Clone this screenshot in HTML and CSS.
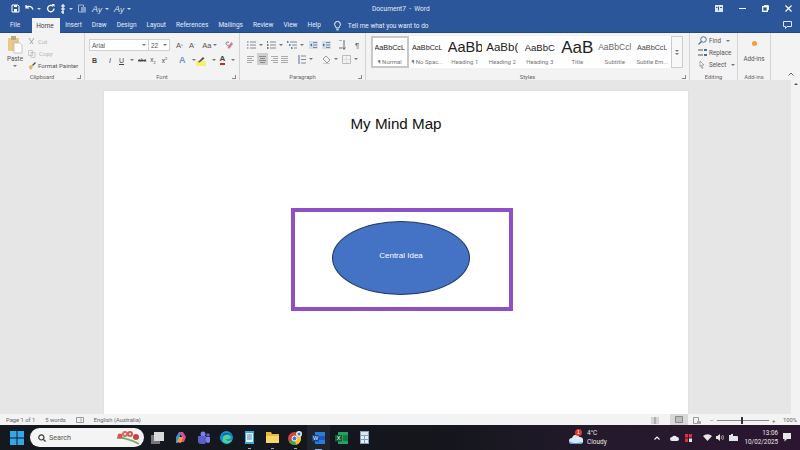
FILE: index.html
```html
<!DOCTYPE html>
<html lang="en">
<head>
<meta charset="utf-8">
<title>Document7 - Word</title>
<link rel="stylesheet" href="styles.css">
</head>
<body>
<div class="app">
  <header class="titlebar">
    <div class="qat">
      <svg class="ic" width="9" height="9" viewBox="0 0 9 9"><path d="M1 1h6l1 1v6H1z" fill="none" stroke="#fff"/><path d="M3 1h3v2H3zM3 5h3v3H3z" fill="#fff"/></svg>
      <svg class="ic" width="9" height="9" viewBox="0 0 9 9"><path d="M1 3.500C3 1.500 7 2 8 5.500M1 1v3h3" fill="none" stroke="#fff" stroke-width="1.200"/></svg>
      <span class="caret w"></span>
      <svg class="ic" width="9" height="9" viewBox="0 0 9 9"><path d="M7 2.200A3.200 3.200 0 1 0 8 4.500" fill="none" stroke="#fff" stroke-width="1.300"/><path d="M5.500 0h3v3z" fill="#fff"/></svg>
      <svg class="ic" width="6" height="10" viewBox="0 0 6 10"><path d="M3 0v10M1 2h4M1 5h4M1 8h3" stroke="#fff" stroke-width="1.200"/></svg>
      <span class="caret w"></span>
      <svg class="ic" width="9" height="9" viewBox="0 0 9 9"><path d="M.5 1h5v7h-5z" fill="none" stroke="#9db4d8"/><path d="M3 3h5v5.500H3z" fill="#7f9bc8"/></svg>
      <span class="qat-a">A<i>y</i></span>
      <span class="caret w"></span>
      <span class="qat-a">A<i>y</i></span>
      <span class="caret w small"></span>
    </div>
    <div class="doc-title">Document7&nbsp; -&nbsp; Word</div>
    <div class="winctl">
      <svg width="8" height="7" viewBox="0 0 8 7"><path d="M0 0h8v7H0z" fill="#dfe7f4"/><path d="M3.500 1.500v4M1 2.500h1.500M5 2.500h2" stroke="#2b579a"/></svg>
      <span class="minbtn"></span>
      <svg width="7" height="7" viewBox="0 0 7 7"><rect x=".7" y="1.700" width="4.600" height="4.600" fill="none" stroke="#fff" stroke-width="1.300"/><path d="M2 .6h4.400V5" fill="none" stroke="#fff"/></svg>
      <svg width="7" height="7" viewBox="0 0 7 7"><path d="M.5.500l6 6M6.500.500l-6 6" stroke="#fff" stroke-width="1.200"/></svg>
    </div>
  </header>

  <nav class="tabs">
    <span class="tab file">File</span>
    <span class="tab active">Home</span>
    <span class="tab">Insert</span>
    <span class="tab">Draw</span>
    <span class="tab">Design</span>
    <span class="tab">Layout</span>
    <span class="tab">References</span>
    <span class="tab">Mailings</span>
    <span class="tab">Review</span>
    <span class="tab">View</span>
    <span class="tab">Help</span>
    <span class="tell">
      <svg width="7" height="10" viewBox="0 0 7 10"><path d="M2.200 7C2 5.500.6 5 .6 3.300a2.900 2.900 0 0 1 5.800 0C6.400 5 5 5.500 4.800 7zM2.300 8.800h2.400" fill="none" stroke="#fff"/></svg>
      Tell me what you want to do
    </span>
    <svg class="comment" width="9" height="8" viewBox="0 0 9 8"><path d="M.5.500h8v5H4L2.500 7.500v-2h-2z" fill="none" stroke="#dfe7f4"/></svg>
  </nav>

  <section class="ribbon">
    <div class="group g-clip">
      <div class="group-body clip-body">
        <div class="paste">
          <svg width="15" height="18" viewBox="0 0 15 18"><rect x="0" y="2" width="11" height="13" rx="1" fill="#e8c787"/><rect x="3" y="0" width="5" height="4" fill="#b9a98c"/><path d="M6 7h6l2 2v8H6z" fill="#fff" stroke="#a9a9a9" stroke-width=".6"/></svg>
          <span>Paste</span>
          <span class="caret"></span>
        </div>
        <div class="clip-list">
          <div class="clip-row off"><svg width="7" height="7" viewBox="0 0 7 7"><path d="M1 0l4 6M6 0L2 6" stroke="#a8a8a8"/></svg>Cut</div>
          <div class="clip-row off"><svg width="8" height="8" viewBox="0 0 8 8"><path d="M.5.500h4v5h-4zM3 2.500h4v5H3z" fill="#f3f3f3" stroke="#bbb" stroke-width=".7"/></svg>Copy</div>
          <div class="clip-row"><svg width="8" height="8" viewBox="0 0 8 8"><path d="M4 3l3-3 1 1-3 3z" fill="#555"/><path d="M1 4l3-1 1 2-2 3-2-2z" fill="#e4b95e"/></svg>Format Painter</div>
        </div>
      </div>
      <div class="group-label">Clipboard<span class="launch"></span></div>
    </div>

    <div class="group g-font">
      <div class="group-body font-body">
        <div class="tool-row">
          <span class="field fname">Arial<span class="caret"></span></span>
          <span class="field fsize">22<span class="caret"></span></span>
          <span class="fbtn">A<sup>^</sup></span>
          <span class="fbtn">A<sup>ˇ</sup></span>
          <span class="fbtn aa">Aa<span class="caret"></span></span>
          <svg class="clear" width="9" height="9" viewBox="0 0 9 9"><path d="M4 1.500C3 .5 1 1 1 2.500 1 4 3 4 3.500 5" fill="none" stroke="#777"/><path d="M4 8L8 3 6.500 1 2.500 6z" fill="#d9788a"/></svg>
        </div>
        <div class="tool-row fmt">
          <b class="t">B</b><i class="t it">I</i><u class="t und">U</u><span class="caret"></span>
          <s class="t abc">abc</s>
          <span class="t sc">x<sub>2</sub></span>
          <span class="t sc">x<sup>2</sup></span>
          <span class="t effect">A</span><span class="caret"></span>
          <svg class="t hl" width="10" height="11" viewBox="0 0 10 11"><rect x="0" y="6" width="10" height="5" fill="#f7f06a"/><path d="M2 7l5-5 1.500 1.500-5 4z" fill="#555"/></svg><span class="caret"></span>
          <span class="t fcolor">A</span><span class="caret"></span>
        </div>
      </div>
      <div class="group-label">Font<span class="launch"></span></div>
    </div>

    <div class="group g-para">
      <div class="group-body font-body">
        <div class="tool-row para-row">
          <svg width="9" height="8" viewBox="0 0 9 8"><path d="M3 1h6M3 4h6M3 7h6" stroke="#888"/><path d="M0 .5h1.500v1H0zM0 3.500h1.500v1H0zM0 6.500h1.500v1H0z" fill="#4a6fa5"/></svg><span class="caret"></span>
          <svg class="li" width="9" height="8" viewBox="0 0 9 8"><path d="M3 1h6M3 4h6M3 7h6" stroke="#888"/><path d="M0 0h1v2H0zM0 3h1.500v2H0zM0 6h1.500v2H0z" fill="#777"/></svg><span class="caret"></span>
          <svg class="li" width="10" height="8" viewBox="0 0 10 8"><path d="M3 1h7M5 4h5M7 7h3" stroke="#888"/><path d="M0 0h1.500v2H0zM2 3h1.500v2H2zM4 6h1.500v2H4z" fill="#5c83b5"/></svg><span class="caret"></span>
          <svg class="ind1" width="9" height="8" viewBox="0 0 9 8"><path d="M0 0h9v8H0z" fill="#d4dde9"/><path d="M4 1.500h4M4 4h4M4 6.500h4" stroke="#7a8ba0"/><path d="M3 2.500v3L1 4z" fill="#2f6db5"/></svg>
          <svg class="ind2" width="9" height="8" viewBox="0 0 9 8"><path d="M0 0h9v8H0z" fill="#d4dde9"/><path d="M4 1.500h4M4 4h4M4 6.500h4" stroke="#7a8ba0"/><path d="M1 2.500v3L3 4z" fill="#2f6db5"/></svg>
          <svg class="srt" width="8" height="10" viewBox="0 0 8 10"><path d="M1 0h3M1 8h3" stroke="#4a6fa5"/><path d="M6 0v9M4.500 7.500L6 9.500 7.500 7.500" fill="none" stroke="#666"/></svg>
          <span class="pilcrow">¶</span>
        </div>
        <div class="tool-row para-row">
          <svg width="7" height="7" viewBox="0 0 7 7"><path d="M0 .5h7M0 2.500h5M0 4.500h7M0 6.500h5" stroke="#aaa"/></svg>
          <span class="align-on"><svg width="7" height="7" viewBox="0 0 7 7"><path d="M0 .5h7M1 2.500h5M0 4.500h7M1 6.500h5" stroke="#8a8a8a"/></svg></span>
          <svg width="7" height="7" viewBox="0 0 7 7"><path d="M0 .5h7M2 2.500h5M0 4.500h7M2 6.500h5" stroke="#aaa"/></svg>
          <svg width="7" height="7" viewBox="0 0 7 7"><path d="M0 .5h7M0 2.500h7M0 4.500h7M0 6.500h7" stroke="#aaa"/></svg>
          <svg class="sp" width="8" height="9" viewBox="0 0 8 9"><path d="M3 1h5M3 4.500h5M3 8h5" stroke="#888"/><path d="M1 0v9" stroke="#4a6fa5"/></svg><span class="caret"></span>
          <svg class="shd" width="9" height="9" viewBox="0 0 9 9"><path d="M4 1l4 4-3 3-4-4z" fill="none" stroke="#999"/><rect x="1" y="8" width="7" height="1" fill="#ccc"/></svg><span class="caret"></span>
          <svg class="bd" width="9" height="9" viewBox="0 0 9 9"><path d="M.5.500h8v8h-8z" fill="none" stroke="#bbb"/><path d="M4.500 1v7M1 4.500h7" stroke="#ddd"/></svg><span class="caret"></span>
        </div>
      </div>
      <div class="group-label">Paragraph<span class="launch"></span></div>
    </div>

    <div class="group g-styles">
      <div class="group-body styles-body">
        <div class="gallery">
          <div class="style on"><span class="pv p-normal">AaBbCcL</span><span class="sn">¶ Normal</span></div>
          <div class="style"><span class="pv p-normal">AaBbCcL</span><span class="sn">¶ No Spac...</span></div>
          <div class="style"><span class="pv p-h1">AaBb</span><span class="sn">Heading 1</span></div>
          <div class="style"><span class="pv p-h2">AaBb(</span><span class="sn">Heading 2</span></div>
          <div class="style"><span class="pv p-h3">AaBbC</span><span class="sn">Heading 3</span></div>
          <div class="style"><span class="pv p-title">AaB</span><span class="sn">Title</span></div>
          <div class="style"><span class="pv p-sub">AaBbCcl</span><span class="sn">Subtitle</span></div>
          <div class="style"><span class="pv p-em">AaBbCcL</span><span class="sn">Subtle Em...</span></div>
        </div>
        <div class="gal-scroll"><span class="caret"></span><span class="caret"></span></div>
      </div>
      <div class="group-label">Styles<span class="launch"></span></div>
    </div>

    <div class="group g-edit">
      <div class="group-body edit-body">
        <div class="edit-row"><svg width="9" height="9" viewBox="0 0 9 9"><circle cx="5.500" cy="3.500" r="2.800" fill="none" stroke="#4a6fa5"/><path d="M3.500 5.500L.5 8.500" stroke="#4a6fa5" stroke-width="1.200"/></svg>Find<span class="caret"></span></div>
        <div class="edit-row"><svg width="9" height="9" viewBox="0 0 9 9"><path d="M0 2h5M0 7h5" stroke="#555"/><path d="M6 1h3v2H6zM6 6h3v2H6z" fill="#4a6fa5"/></svg>Replace</div>
        <div class="edit-row"><svg width="9" height="9" viewBox="0 0 9 9"><path d="M2 1l4 4H3.500L5 8 4 8.500 2.500 5.500 2 6.500z" fill="#fff" stroke="#8a8a8a" stroke-width=".7"/></svg>Select<span class="caret"></span></div>
      </div>
      <div class="group-label plain">Editing</div>
    </div>

    <div class="group g-add">
      <div class="group-body add-body">
        <span class="dot"></span>
        <span>Add-ins</span>
      </div>
      <div class="group-label plain">Add-ins</div>
    </div>
    <div class="ribbon-end"><svg width="6" height="4" viewBox="0 0 6 4"><path d="M.5 3.500L3 1l2.500 2.500" fill="none" stroke="#666"/></svg></div>
  </section>

  <main class="workspace">
    <div class="page-area">
      <article class="page">
        <h1 class="doc-heading">My Mind Map</h1>
        <div class="highlight">
          <div class="ellipse">Central Idea</div>
        </div>
      </article>
    </div>
    <aside class="vscroll"><span class="up"></span></aside>
  </main>

  <footer class="status">
    <span>Page 1 of 1</span>
    <span>5 words</span>
    <svg width="8" height="6" viewBox="0 0 8 6"><path d="M.5.500h7v5h-7z" fill="none" stroke="#999"/><path d="M5 1.500v3" stroke="#999"/></svg>
    <span>English (Australia)</span>
    <div class="status-right">
      <svg class="view" width="8" height="7" viewBox="0 0 8 7"><path d="M0 0h8v7H0z" fill="#d5d5d5"/><path d="M4 0v7" stroke="#888"/></svg>
      <span class="view-on"><svg width="8" height="7" viewBox="0 0 8 7"><path d="M.5.500h7v6h-7z" fill="#bdbdbd" stroke="#888"/></svg></span>
      <svg class="view" width="8" height="7" viewBox="0 0 8 7"><path d="M.5.500h5v6h-5z" fill="none" stroke="#999"/><path d="M4 4h4v3H4z" fill="#aaa"/></svg>
      <div class="zoom"><span class="zm">−</span><div class="ztrack"><span class="zthumb"></span></div><span class="zm">+</span></div>
      <span class="pct">100%</span>
    </div>
  </footer>

  <div class="taskbar">
    <div class="task-left">
      <svg class="win" width="14" height="14" viewBox="0 0 15 15"><path d="M0 0h7v7H0zM8 0h7v7H8zM0 8h7v7H0zM8 8h7v7H8z" fill="#32a7ea"/></svg>
      <div class="search">
        <svg width="8" height="8" viewBox="0 0 9 9"><circle cx="3.800" cy="3.800" r="2.900" fill="none" stroke="#333" stroke-width="1.300"/><path d="M6 6l2.500 2.500" stroke="#333" stroke-width="1.400"/></svg>
        <span>Search</span>
        <svg class="doodle" width="24" height="17" viewBox="0 0 24 17"><path d="M1 9c4-1 16 2 22 6" stroke="#6fb06f" stroke-width="2" fill="none"/><circle cx="4" cy="7" r="2.500" fill="#d9534f"/><circle cx="9" cy="5" r="3" fill="#e06a60"/><circle cx="14" cy="5" r="3" fill="#d9534f"/><circle cx="20" cy="8" r="3" fill="#c9403c"/><circle cx="9" cy="5" r="1" fill="#fff"/><circle cx="14" cy="5" r="1" fill="#fff"/></svg>
      </div>
      <div class="apps">
        <span class="tb-app"><svg width="13" height="12" viewBox="0 0 13 12"><path d="M0 3h9v9H0z" fill="#777"/><path d="M3 0h10v9H3z" fill="#d9d9d9"/></svg></span>
        <span class="tb-app"><svg width="13" height="13" viewBox="0 0 13 13"><path d="M2 6l3-5h3L5 7 4 12H2z" fill="#3a8fe0"/><path d="M5 1h4l3 5-2 5H6l2-5z" fill="#d84f8c"/><path d="M3 11l2-5h4l-2 6z" fill="#f0a030"/></svg></span>
        <span class="tb-app"><svg width="13" height="13" viewBox="0 0 13 13"><circle cx="6" cy="3" r="2.500" fill="#7b83eb"/><circle cx="11" cy="4" r="1.800" fill="#5b5fc7"/><path d="M1 5h8v6a2 2 0 0 1-2 2H4a3 3 0 0 1-3-3z" fill="#5b5fc7"/><path d="M9 6h4v4a2 2 0 0 1-4 0z" fill="#7b83eb"/></svg></span>
        <span class="tb-app"><svg width="13" height="13" viewBox="0 0 13 13"><circle cx="6.500" cy="6.500" r="6.500" fill="#1493d8"/><path d="M3 8a4 4 0 0 1 7-3c1 1 1 3-1 3H6c0 2 3 3 6 1-1 3-5 4-7 3-2-1-3-2-2-4z" fill="#53d38a"/><path d="M1 6c1-4 8-6 11-1-3-2-8-2-11 1z" fill="#0b62a8"/></svg></span>
        <span class="tb-app open"><svg width="9" height="13" viewBox="0 0 9 13"><path d="M0 0h9v13H0z" fill="#3aa6dd"/><path d="M1 2h7v9H1z" fill="#e4f1f8"/><path d="M2 4h5M2 6h5M2 8h5" stroke="#4a8fb5"/></svg></span>
        <span class="tb-app open"><svg width="13" height="11" viewBox="0 0 13 11"><path d="M0 0h5l1 2h7v9H0z" fill="#e8b93a"/><path d="M0 4h13v7H0z" fill="#f7d768"/></svg></span>
        <span class="tb-app open"><svg width="14" height="14" viewBox="0 0 14 14"><circle cx="6.500" cy="7.500" r="6.500" fill="#d9433a"/><path d="M6.500 7.500L1 11a6.500 6.500 0 0 0 7 2.700z" fill="#3aa757"/><path d="M6.500 7.500L8 13.800A6.500 6.500 0 0 0 12.500 5z" fill="#f5c518"/><circle cx="6.500" cy="7.500" r="2.500" fill="#3a7fe0" stroke="#fff"/><circle cx="11" cy="3" r="3" fill="#e8eef7"/><circle cx="11" cy="3" r="1.500" fill="#3a6fb5"/></svg></span>
        <span class="tb-app tb-active"><svg width="13" height="12" viewBox="0 0 13 12"><path d="M3 0h10v12H3z" fill="#2b7cd3"/><path d="M3 4h10v4H3z" fill="#185abd"/><path d="M0 3h7v6.500H0z" fill="#10459c"/><text x="1" y="8.200" font-size="5.500" fill="#fff" font-family="Liberation Sans">W</text></svg></span>
        <span class="tb-app"><svg width="13" height="12" viewBox="0 0 13 12"><path d="M3 0h10v12H3z" fill="#21a366"/><path d="M8 3h5v6H8z" fill="#107c41"/><path d="M0 3h7v6.500H0z" fill="#185c37"/><text x="1.800" y="8.200" font-size="5.500" fill="#fff" font-family="Liberation Sans">X</text></svg></span>
        <span class="tb-app"><svg width="9" height="13" viewBox="0 0 9 13"><path d="M0 0h9v13H0z" fill="#7fa0bf"/><path d="M1 1h7v3H1z" fill="#dbe6ef"/><path d="M1 5h3v3H1zM5 5h3v3H5zM1 9h3v3H1zM5 9h3v3H5z" fill="#e9eff5"/></svg></span>
      </div>
    </div>
    <div class="task-right">
      <div class="weather">
        <span class="w-ic">
          <svg width="14" height="11" viewBox="0 0 14 11"><path d="M3 11a3 3 0 0 1 0-6 4 4 0 0 1 7.500-1A3.500 3.500 0 0 1 11 11z" fill="#dbe8fa"/><path d="M0 8c2 2 8 3 13 1 0 1-1 2-2 2H3C1 11 0 10 0 8z" fill="#5a9be8"/></svg>
          <b class="badge">1</b>
        </span>
        <div class="w-txt"><span>4°C</span><span>Cloudy</span></div>
      </div>
      <div class="tray">
        <svg width="6" height="4" viewBox="0 0 6 4"><path d="M.5 3.500L3 1l2.500 2.500" fill="none" stroke="#fff" stroke-width="1.100"/></svg>
        <svg class="t-cloud" width="9" height="6" viewBox="0 0 9 6"><path d="M2 6a2 2 0 0 1 0-4 3 3 0 0 1 5 0 2 2 0 0 1 0 4z" fill="#e8eaf0"/></svg>
        <svg width="7" height="8" viewBox="0 0 7 8"><path d="M0 0h3v3.500H0zM4 0h3v3.500H4zM0 4.500h3V8H0z" fill="#e22f3c"/><path d="M4 4.500h3V8H4z" fill="#e8e8e8"/></svg>
        <svg class="t-wifi" width="9" height="7" viewBox="0 0 9 7"><path d="M0 2a7 7 0 0 1 9 0L4.500 7z" fill="#e6e6e6"/></svg>
        <svg width="8" height="7" viewBox="0 0 8 7"><path d="M0 2h1.500L4 0v7L1.500 5H0z" fill="#e6e6e6"/><path d="M5 2a2 2 0 0 1 0 3M6.500 1a3.500 3.500 0 0 1 0 5" fill="none" stroke="#e6e6e6" stroke-width=".7"/></svg>
        <svg class="t-batt" width="9" height="7" viewBox="0 0 9 7"><path d="M0 1h2V0h2v2h4a1 1 0 0 1 1 1v4H0z" fill="#dfe3ea"/></svg>
      </div>
      <div class="clock"><span>13:06</span><span>10/02/2025</span></div>
      <svg class="notif" width="8" height="9" viewBox="0 0 8 9"><path d="M0 0h8v6H4L1.500 8.500V6H0z" fill="#e6e6e6"/></svg>
    </div>
  </div>
</div>
</body>
</html>
```

FILE: styles.css
```css
* { box-sizing: border-box; }
html, body { margin: 0; padding: 0; }
body { width: 800px; height: 450px; overflow: hidden; font-family: Roboto, "Liberation Sans", sans-serif; color: #444; }
.app { display: flex; flex-direction: column; width: 800px; height: 450px; background: #e6e6e6; }
svg { display: block; flex: none; }

.caret { display: inline-block; flex: none; width: 0; height: 0; border-left: 2px solid transparent; border-right: 2px solid transparent; border-top: 2px solid #777; }
.caret.w { border-top-color: #cfdcf0; }
.caret.small { margin-left: 5px; }

/* title bar */
.titlebar { display: flex; align-items: center; height: 17px; padding: 0 0 0 11px; background: #2b579a; color: #fff; flex: none; }
.qat { display: flex; align-items: center; gap: 5px; width: 361px; }
.qat .caret { margin-left: -2px; }
.qat-a { font: italic 9px "Liberation Sans", sans-serif; color: #dfe7f4; width: 10px; white-space: nowrap; }
.qat-a i { font-size: 8px; }
.doc-title { font-size: 6.600px; color: #e4ebf6; white-space: nowrap; }
.winctl { display: flex; align-items: center; margin-left: auto; padding-right: 8px; gap: 16px; }
.minbtn { width: 7px; height: 1px; background: #fff; }

/* tabs */
.tabs { display: flex; align-items: flex-end; height: 16px; padding-left: 10px; background: #2b579a; color: #e6ecf6; font-size: 6.500px; flex: none; border-bottom: 1px solid #24497f; }
.tab { padding: 0 0 2px; margin-right: 10px; line-height: 9px; white-space: nowrap; }
.tab.file { margin-right: 12px; }
.tab.active { background: #f3f3f3; color: #444; height: 15px; margin: 0 5px -1px 0; padding: 4px 4px 0; width: 28px; }
.tell { display: flex; align-items: center; gap: 7px; margin-left: 3px; padding-bottom: 1px; white-space: nowrap; }
.comment { margin: 0 8px 3px auto; }

/* ribbon */
.ribbon { display: flex; height: 47px; background: #f3f3f3; flex: none; font-size: 6.300px; color: #555; }
.group { display: flex; flex-direction: column; border-right: 1px solid #d4d4d4; }
.group-body { flex: 1; display: flex; min-height: 0; }
.group-label { display: flex; justify-content: center; align-items: center; height: 8px; margin-bottom: -1px; position: relative; font-size: 5.800px; color: #666; }
.launch { position: absolute; right: 3px; bottom: 2px; width: 4px; height: 4px; border-right: 1px solid #888; border-bottom: 1px solid #888; }
.g-clip { width: 85px; }
.g-font { width: 155px; }
.g-para { width: 126px; }
.g-styles { width: 324px; }
.g-edit { width: 48px; }
.g-add { width: 33px; }

.clip-body { padding: 3px 0 0 7px; gap: 5px; }
.paste { display: flex; flex-direction: column; align-items: center; width: 16px; font-size: 6.300px; gap: 1px; }
.paste .caret { margin-top: 1px; }
.clip-list { display: flex; flex-direction: column; gap: 3px; padding-top: 1px; }
.clip-row { display: flex; align-items: center; gap: 2px; height: 9px; white-space: nowrap; font-size: 6.100px; }
.clip-row.off { color: #b5b5b5; gap: 3px; }

.font-body { flex-direction: column; padding: 6px 4px 0; gap: 2px; }
.tool-row { display: flex; align-items: center; height: 12px; }
.field { display: flex; align-items: center; justify-content: space-between; height: 12px; background: #fff; border: 1px solid #d0d0d0; padding: 0 2px; font: 6.500px "Liberation Sans", sans-serif; }
.fname { width: 60px; }
.fsize { width: 22px; margin-left: -1px; }
.fbtn { display: flex; align-items: center; margin-left: 6px; font: 7.500px "Liberation Sans", sans-serif; color: #555; }
.fbtn sup { font-size: 4px; }
.fbtn.aa { margin-left: 7px; gap: 2px; }
.clear { margin-left: 8px; }
.tool-row.fmt { padding-left: 3px; gap: 2px; font: 7px "Liberation Sans", sans-serif; color: #444; height: 14px; }
.t { margin-right: 4px; text-decoration-thickness: 1px; }
.it { margin-left: 6px; }
.und { margin-left: 2px; }
.abc { font-size: 5px; margin-left: 2px; margin-right: 2px; }
.sc { font-size: 6.500px; }
.sc sub, .sc sup { font-size: 4px; line-height: 0; }
.effect { color: #6d96d0; font-size: 9px; font-weight: bold; margin-left: 6px; }
.hl { margin-left: -2px; }
.fcolor { color: #444; font-weight: bold; font-size: 8px; border-bottom: 2px solid #d8232a; line-height: 8px; margin-left: 2px; }

.para-row { gap: 3px; padding-left: 3px; }
.para-row .li { margin-left: 1px; }
.para-row .ind1 { margin-left: 2px; }
.para-row .ind2 { margin-left: 1px; }
.para-row .srt { margin-left: 4px; }
.para-row .sp { margin-left: 7px; }
.para-row .shd { margin-left: 6px; }
.para-row .bd { margin-left: 1px; }
.pilcrow { font: 8px "Liberation Sans", sans-serif; color: #666; margin-left: 6px; }
.align-on { display: flex; align-items: center; justify-content: center; width: 11px; height: 12px; background: #cfcfcf; }

.styles-body { padding: 3px 0 0 5px; align-items: flex-start; }
.gallery { display: grid; grid-template-columns: repeat(8, 37.500px); width: 300px; height: 32px; background: #fff; }
.style { display: flex; flex-direction: column; align-items: center; overflow: hidden; height: 32px; border: 2px solid transparent; }
.style.on { border-color: #c8c8c8; }
.pv { display: block; height: 19px; line-height: 19px; font-family: "Liberation Sans", sans-serif; white-space: nowrap; color: #222; overflow: hidden; max-width: 34px; }
.p-normal { font-size: 7.200px; }
.p-h1 { font-size: 14.500px; }
.p-h2 { font-size: 11.500px; }
.p-h3 { font-size: 9.500px; }
.p-title { font-size: 17px; }
.p-sub { font-size: 8.500px; color: #666; }
.p-em { font-size: 7.200px; color: #444; }
.sn { font-size: 6px; color: #777; white-space: nowrap; line-height: 9px; }
.gal-scroll { display: flex; flex-direction: column; align-items: center; justify-content: center; gap: 1px; width: 12px; height: 32px; background: #f8f8f8; border: 1px solid #ccc; }

.edit-body { flex-direction: column; padding: 3px 0 0 8px; gap: 3px; }
.edit-row { display: flex; align-items: center; gap: 2px; height: 9px; white-space: nowrap; }
.edit-row .caret { margin-left: 3px; }
.add-body { flex-direction: column; align-items: center; padding-top: 8px; gap: 9px; }
.dot { width: 5px; height: 5px; border-radius: 50%; background: #f0a030; }
.ribbon-end { flex: 1; display: flex; justify-content: flex-end; align-items: flex-end; padding: 0 6px 4px 0; }

/* document */
.workspace { flex: 1; display: flex; min-height: 0; background: #e6e6e6; }
.page-area { flex: 1; padding: 11px 0 0 104px; min-width: 0; overflow: hidden; }
.page { width: 584px; height: 323px; background: #fff; padding-top: 24px; font-family: "Liberation Sans", sans-serif; box-shadow: 0 0 1px #c8c8c8; }
.doc-heading { margin: 0; font-size: 15.200px; font-weight: normal; line-height: 18px; color: #111; text-align: center; }
.highlight { display: flex; align-items: center; width: 222px; height: 103px; margin: 75px 0 0 187px; padding-left: 37px; border: 4px solid #8e50c4; }
.ellipse { display: flex; justify-content: center; align-items: center; width: 138px; height: 74px; margin-bottom: 3px; border-radius: 50%; background: #4472c4; border: 1px solid #1f3864; color: #fff; font-size: 8px; padding-bottom: 6px; }
.vscroll { width: 9px; display: flex; flex-direction: column; background: #f3f3f3; }
.up { width: 0; height: 0; margin: 3px auto 0; border-left: 2px solid transparent; border-right: 2px solid transparent; border-bottom: 2px solid #555; }

/* status bar */
.status { display: flex; align-items: center; gap: 10px; height: 11px; padding: 1px 0 0 6px; background: #f3f3f3; font-size: 5.800px; color: #666; flex: none; }
.status > span { white-space: nowrap; }
.status-right { display: flex; align-items: center; margin-left: auto; height: 10px; padding-right: 3px; }
.view-on { display: flex; align-items: center; justify-content: center; width: 18px; height: 11px; margin: -1px 5px 0 11px; background: #d8d8d8; }
.zoom { display: flex; align-items: center; margin-left: 9px; gap: 3px; }
.zm { font-size: 6px; width: 4px; }
.ztrack { position: relative; width: 52px; height: 1px; background: #888; }
.zthumb { position: absolute; left: 24px; top: -3px; width: 2px; height: 7px; background: #333; }
.pct { margin-left: 7px; width: 14px; white-space: nowrap; }

/* taskbar */
.taskbar { display: flex; justify-content: space-between; align-items: center; height: 25px; flex: none; background: linear-gradient(90deg, #14181f 0%, #14161c 55%, #241a2c 75%, #2c1530 100%); color: #e8e8e8; }
.task-left { display: flex; align-items: center; padding-left: 10px; }
.search { display: flex; align-items: center; width: 114px; height: 19px; margin-left: 6px; padding: 0 2px 0 8px; gap: 3px; border-radius: 10px; background: #f4f4f4; color: #555; font-size: 7.200px; }
.doodle { margin-left: auto; margin-right: 2px; }
.apps { display: flex; align-items: center; margin-left: 1.500px; }
.tb-app { position: relative; display: flex; align-items: center; justify-content: center; width: 23px; height: 25px; }
.open::after { content: ""; position: absolute; bottom: 1px; left: 10px; width: 3px; height: 1px; background: #aaa; }
.tb-active { background: #1f232b; }
.tb-active::after { content: ""; position: absolute; bottom: 0; left: 8px; width: 7px; height: 1px; background: #7fb0e8; }
.task-right { display: flex; align-items: center; padding-right: 9px; }
.weather { display: flex; align-items: center; gap: 4px; }
.w-ic { position: relative; display: block; padding-top: 2px; }
.badge { position: absolute; top: -2px; left: 6px; width: 7px; height: 7px; border-radius: 50%; background: #d93a2b; color: #fff; font: 5px/7px "Liberation Sans", sans-serif; text-align: center; }
.w-txt { display: flex; flex-direction: column; font-size: 6.500px; line-height: 9px; width: 20px; white-space: nowrap; }
.tray { display: flex; align-items: center; gap: 6px; margin-left: 47px; }
.t-cloud { margin-left: 4px; }
.t-wifi { margin-left: 5px; margin-right: -2px; }
.t-batt { margin-left: -1px; }
.clock { display: flex; flex-direction: column; align-items: flex-end; width: 33px; margin-left: 7px; font-size: 6.300px; line-height: 9px; white-space: nowrap; }
.notif { margin-left: 5px; }
```
